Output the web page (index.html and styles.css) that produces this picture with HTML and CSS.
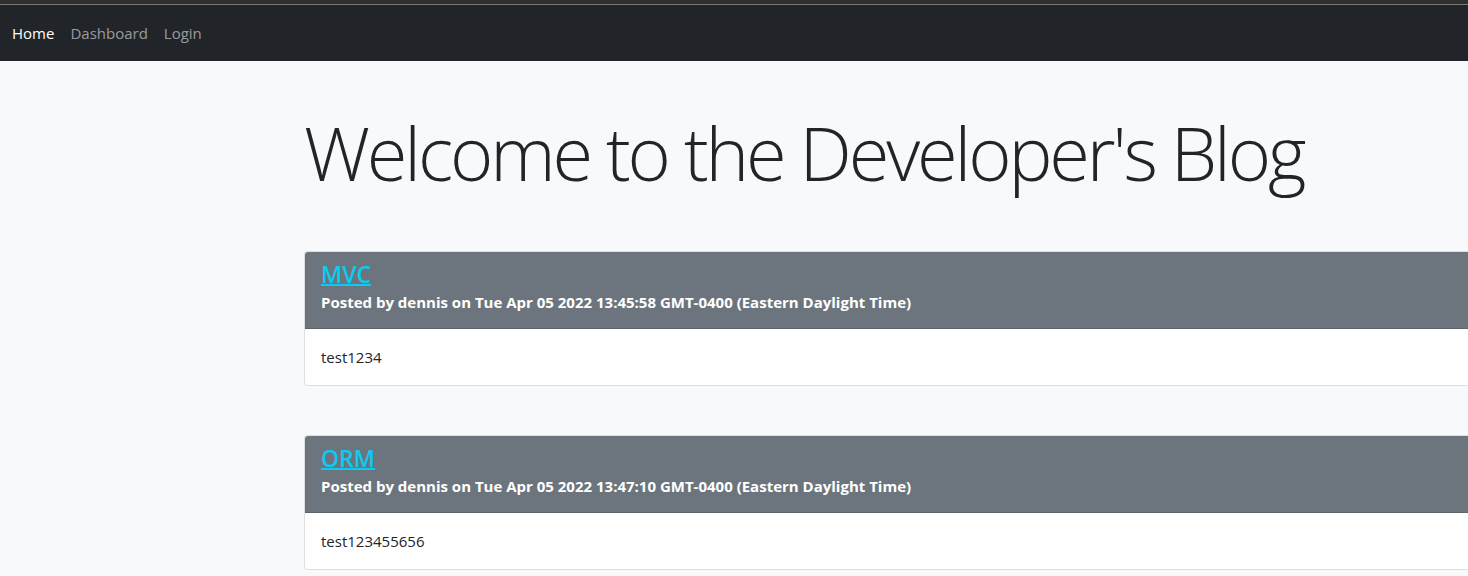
FILE: index.html
```html
<!DOCTYPE html>
<html lang="en">
<head>
<meta charset="utf-8">
<title>Developer's Blog</title>
<link rel="stylesheet" href="styles.css">
</head>
<body>
<div class="topline"></div>
<nav class="navbar">
  <a class="nav-link active" href="#">Home</a>
  <a class="nav-link" href="#">Dashboard</a>
  <a class="nav-link" href="#">Login</a>
</nav>
<main class="main">
  <h1 class="display">Welcome to the Developer's Blog</h1>
  <section class="posts">
    <article class="card">
      <header class="card-header">
        <h4 class="post-title"><a href="#">MVC</a></h4>
        <p class="post-meta">Posted by dennis on Tue Apr 05 2022 13:45:58 GMT-0400 (Eastern Daylight Time)</p>
      </header>
      <div class="card-body">test1234</div>
    </article>
    <article class="card">
      <header class="card-header">
        <h4 class="post-title"><a href="#">ORM</a></h4>
        <p class="post-meta">Posted by dennis on Tue Apr 05 2022 13:47:10 GMT-0400 (Eastern Daylight Time)</p>
      </header>
      <div class="card-body">test123455656</div>
    </article>
  </section>
</main>
</body>
</html>
```
FILE: styles.css
```css
html { overflow: hidden; }
* { box-sizing: border-box; }
body {
  margin: 0;
  background: #f8f9fa;
  color: #212529;
  font-family: "Open Sans", "Noto Sans", sans-serif;
  font-size: 16px;
  line-height: 1.5;
}
.topline {
  height: 5px;
  background: #2f2f2f;
  border-bottom: 1px solid #7a7a7a;
}
.navbar {
  background: #212529;
  height: 56px;
  display: flex;
  align-items: center;
  padding: 0 4px;
}
.nav-link {
  color: rgba(255,255,255,.55);
  text-decoration: none;
  padding: 8px 8px;
  font-size: 15px;
}
.nav-link.active { color: #fff; }
.main {
  padding-left: 304px;
  padding-top: 48px;
  width: 1700px;
}
.display {
  font-weight: 300;
  font-size: 74px;
  letter-spacing: -3.15px;
  line-height: 1.2;
  margin: 0 0 53px 0;
}
.posts {
  display: flex;
  flex-direction: column;
  gap: 49px;
}
.card {
  background: #fff;
  border: 1px solid rgba(0,0,0,.125);
  border-radius: 4px;
  overflow: hidden;
}
.card-header {
  background: #6c757d;
  padding: 8px 16px;
  border-bottom: 1px solid rgba(0,0,0,.125);
  height: 77px;
}
.post-title {
  margin: 0;
  font-size: 23px;
  font-weight: 600;
  line-height: 1.3;
}
.post-title a { color: #0dcaf0; text-decoration-thickness: 2px; }
.post-meta {
  margin: 1px 0 0;
  color: #fff;
  font-weight: 700;
  font-size: 15px;
}
.card-body {
  padding: 16px;
  font-size: 15px;
  line-height: 24px;
}
```
